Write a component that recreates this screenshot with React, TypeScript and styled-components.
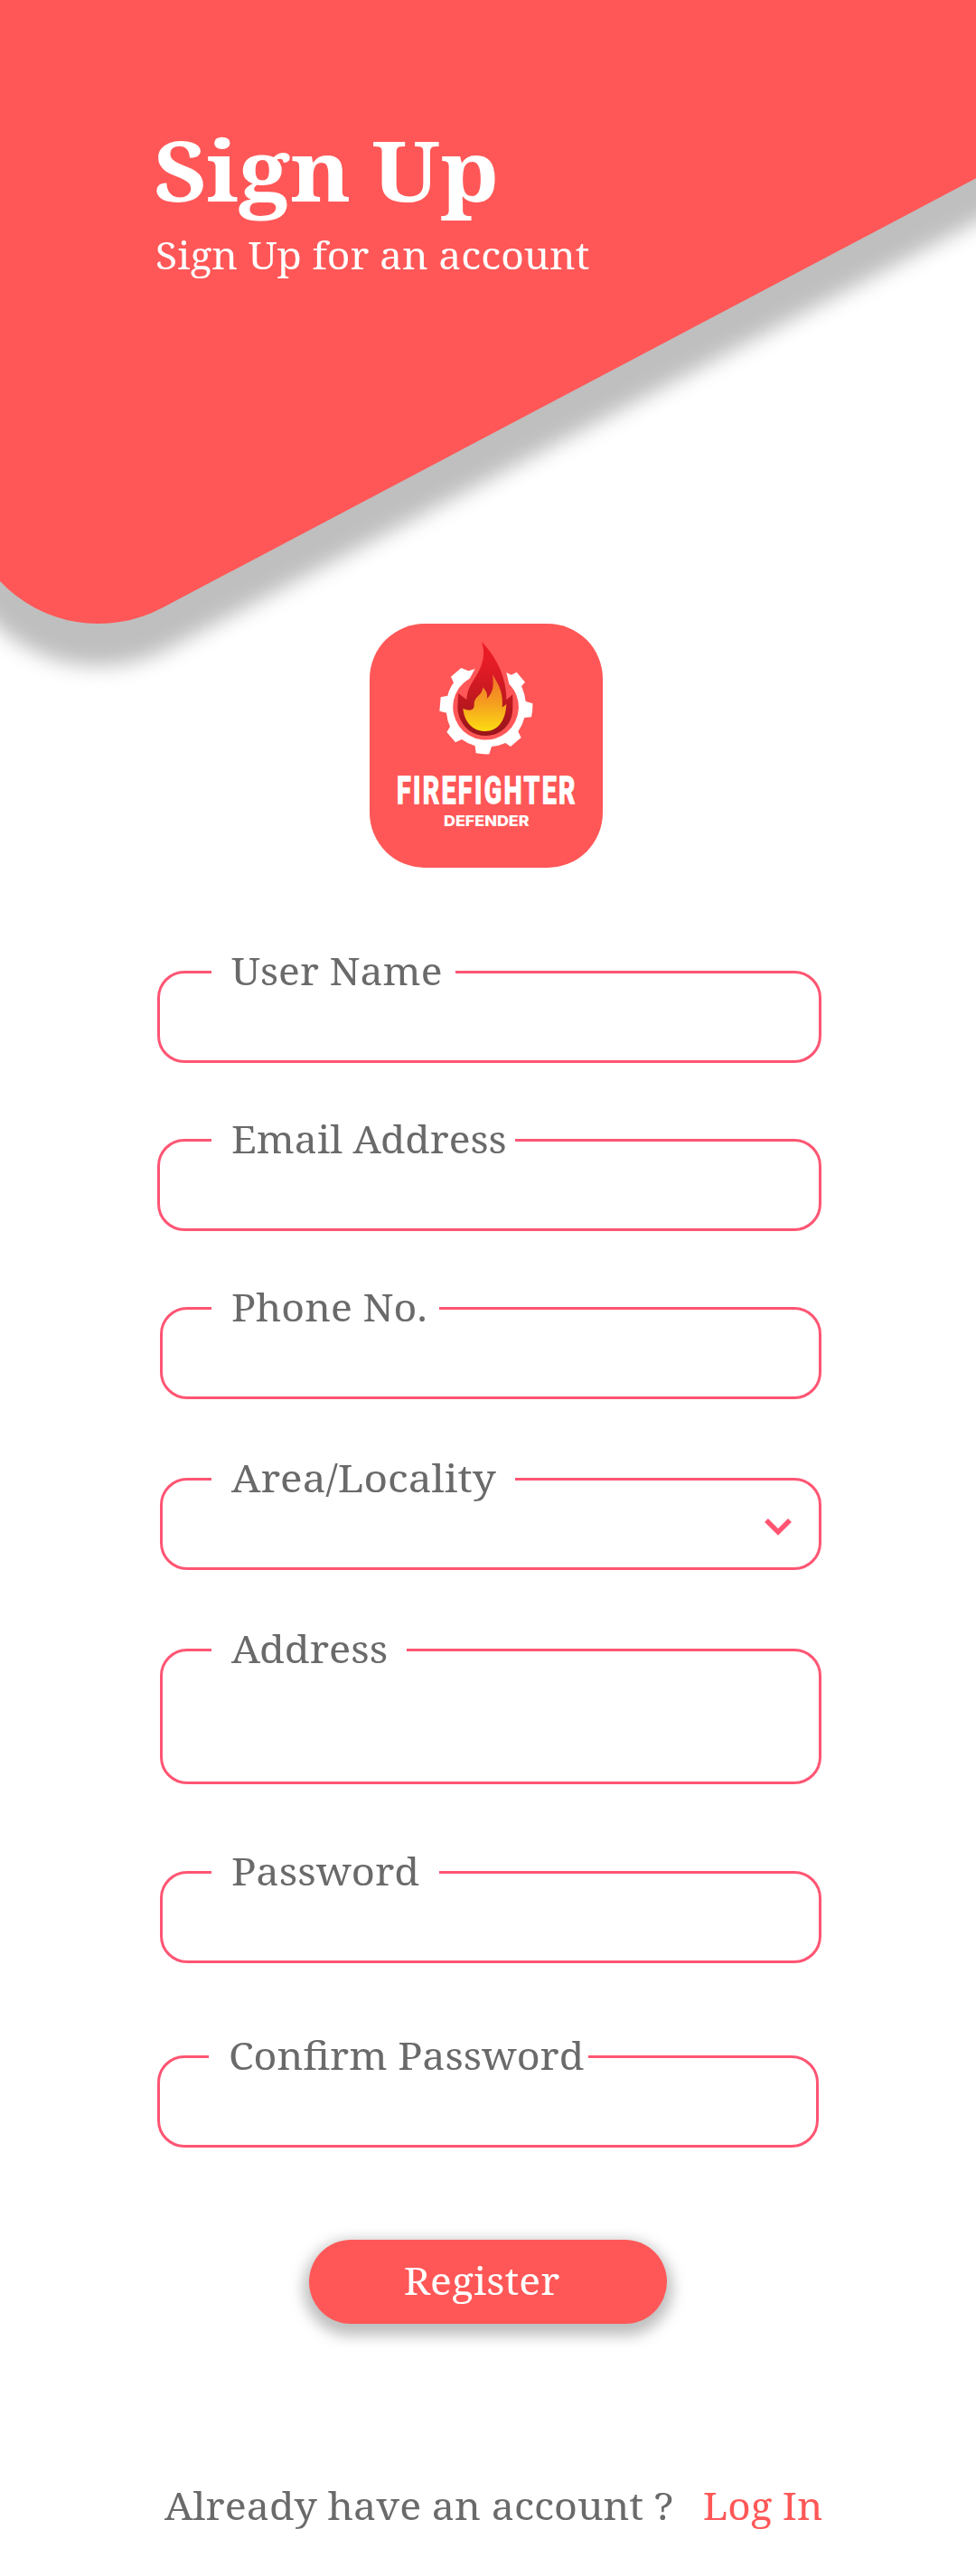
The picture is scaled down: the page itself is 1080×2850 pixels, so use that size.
import React from 'react';
import styled, { createGlobalStyle } from 'styled-components';

const coral = '#ff5757';
const pink = '#ff5573';
const grey = '#6a6a6a';
const LEGEND = 53;
const LIFT = 25;

const GlobalStyle = createGlobalStyle`
  * { box-sizing: border-box; }
  body { margin: 0; background: #fff; }
`;

const Page = styled.main`
  display: flow-root;
  width: 1080px;
  height: 2850px;
  overflow: hidden;
  background: #fff;
  font-family: 'Noto Serif', 'Droid Serif', 'DejaVu Serif Condensed', 'DejaVu Serif', serif;
  font-size: 41px;
  color: ${grey};
`;

const Wide = styled.span<{ $x: number; $from?: string }>`
  display: inline-block;
  transform: scaleX(${(p) => p.$x});
  transform-origin: ${(p) => p.$from ?? 'left'} center;
`;

const Header = styled.header`
  position: relative;
  height: 690px;
  padding: 132px 0 0 172px;
  color: #fff;
`;

const Backdrop = styled.svg`
  position: absolute;
  left: 0;
  top: 0;
  overflow: visible;
`;

const Title = styled.h1`
  position: relative;
  margin: 0 0 0 -2px;
  font-size: 92px;
  font-weight: 700;
  line-height: 112px;
  word-spacing: -3px;
  white-space: nowrap;
`;

const Subtitle = styled.p`
  position: relative;
  margin: 11px 0 0;
  line-height: 54px;
  white-space: nowrap;
`;

const Logo = styled.svg`
  display: block;
  position: relative;
  margin: 0 0 0 409px;
`;

const Form = styled.form`
  display: flex;
  flex-direction: column;
  padding-top: 89px;
`;

const Field = styled.fieldset<{ $left: number; $width: number; $height: number; $gap: number }>`
  flex: none;
  min-width: 0;
  width: ${(p) => p.$width}px;
  height: ${(p) => p.$height + LIFT}px;
  margin: 0 0 ${(p) => p.$gap - LIFT}px ${(p) => p.$left}px;
  padding: 0;
  border: 3px solid ${pink};
  border-radius: 30px;
`;

const Legend = styled.legend<{ $indent: number; $width: number }>`
  width: ${(p) => p.$width}px;
  height: ${LEGEND}px;
  margin-left: ${(p) => p.$indent}px;
  padding: 0 0 0 22px;
  line-height: ${LEGEND - 3}px;
  white-space: nowrap;
`;

const Control = styled.div`
  display: flex;
  justify-content: flex-end;
  padding: 17px 30px 0 0;
`;

const Register = styled.button`
  display: block;
  width: 396px;
  height: 93px;
  margin: 0 0 0 342px;
  padding: 0 0 3px;
  border: 0;
  border-radius: 47px;
  background: ${coral};
  box-shadow: 0 7px 16px 6px rgba(0, 0, 0, 0.26);
  color: #fff;
  font: inherit;
  white-space: nowrap;
`;

const Footer = styled.footer`
  display: flex;
  justify-content: space-between;
  width: 728px;
  margin: 174px 0 0 182px;
  line-height: 54px;
  white-space: nowrap;
`;

const LogIn = styled.a`
  color: ${coral};
`;

type FieldSpec = {
  label: string;
  left: number;
  width: number;
  height: number;
  gap: number;
  indent: number;
  legend: number;
  stretch: number;
  select?: boolean;
};

const fields: FieldSpec[] = [
  { label: 'User Name', left: 174, width: 735, height: 102, gap: 84, indent: 57, legend: 270, stretch: 1.087 },
  { label: 'Email Address', left: 174, width: 735, height: 102, gap: 84, indent: 57, legend: 336, stretch: 1.086 },
  { label: 'Phone No.', left: 177, width: 732, height: 102, gap: 87, indent: 54, legend: 252, stretch: 1.09 },
  { label: 'Area/Locality', left: 177, width: 732, height: 102, gap: 87, indent: 54, legend: 336, stretch: 1.122, select: true },
  { label: 'Address', left: 177, width: 732, height: 150, gap: 96, indent: 54, legend: 216, stretch: 1.105 },
  { label: 'Password', left: 177, width: 732, height: 102, gap: 102, indent: 54, legend: 252, stretch: 1.105 },
  { label: 'Confirm Password', left: 174, width: 732, height: 102, gap: 127, indent: 54, legend: 420, stretch: 1.094 },
];

function Emblem() {
  return (
    <Logo width="258" height="270" viewBox="26 30 774 810">
      <defs>
        <linearGradient id="flame" x1="0" y1="0" x2="0" y2="1">
          <stop offset="0" stopColor="#f01c26" />
          <stop offset="0.3" stopColor="#e01b25" />
          <stop offset="1" stopColor="#98151b" />
        </linearGradient>
        <linearGradient id="core" x1="0" y1="0" x2="0" y2="1">
          <stop offset="0" stopColor="#f1702a" />
          <stop offset="0.5" stopColor="#f59d20" />
          <stop offset="1" stopColor="#fddc12" />
        </linearGradient>
      </defs>
      <rect x="26" y="30" width="774" height="810" rx="183" fill={coral} />
      <path
        fill="#fff"
        d="M376 180L354 187L330 177L296 206L305 226Q290 246 285 269L262 274L258 320L281 326Q283 350 293 372L282 390L311 424L332 414Q352 429 376 436L379 460Q401 464 423 463L431 438Q455 436 477 426L494 438L529 408L519 388Q534 366 540 342L563 340Q568 318 567 295L544 288Q541 261 530 238L542 224L514 191L496 200L480 192L489 230A109 109 0 1 1 358 212Z"
      />
      <path
        fill="url(#flame)"
        d="M397 89C443 136 481 202 480 283L501 265V310C501 365 462 402 412 402C361 402 321 364 318 310L320 261L348 282C350 237 374 219 391 182C406 149 409 120 397 89Z"
      />
      <path
        fill="url(#core)"
        d="M434 198C453 232 470 254 466 308L480 297C478 350 453 387 410 387C368 387 340 355 336 311C351 319 373 322 373 300C371 270 401 270 402 241C415 255 418 264 415 279C439 256 438 229 434 198Z"
      />
      <g transform="translate(116 627) scale(0.7 1)">
        <text x="0" y="0" fill="#fff" stroke="#fff" strokeWidth="5" fontFamily="Roboto, sans-serif" fontWeight="700" fontSize="130" letterSpacing="11" textLength="856" lengthAdjust="spacingAndGlyphs">
          FIREFIGHTER
        </text>
      </g>
      <text x="272" y="702" fill="#fff" fontFamily="Inter, sans-serif" fontWeight="800" fontSize="49" textLength="284" lengthAdjust="spacingAndGlyphs">
        DEFENDER
      </text>
    </Logo>
  );
}

export default function App() {
  return (
    <Page>
      <GlobalStyle />
      <Header>
        <Backdrop width="1080" height="780" viewBox="0 0 1080 780">
          <defs>
            <filter id="soft" x="-20%" y="-20%" width="140%" height="140%">
              <feGaussianBlur stdDeviation="11" />
            </filter>
          </defs>
          <path
            d="M-200 -100H1280V140.5L186 718A165 165 0 0 1 -56 572Z"
            fill="#000"
            fillOpacity="0.25"
            filter="url(#soft)"
          />
          <path d="M0 0H1080V197.3L179 672.7A150 150 0 0 1 0 643Z" fill={coral} />
        </Backdrop>
        <Title>
          <Wide $x={1.1}>Sign Up</Wide>
        </Title>
        <Subtitle>
          <Wide $x={1.085}>Sign Up for an account</Wide>
        </Subtitle>
      </Header>
      <Emblem />
      <Form>
        {fields.map((f) => (
          <Field key={f.label} $left={f.left} $width={f.width} $height={f.height} $gap={f.gap}>
            <Legend $indent={f.indent} $width={f.legend}>
              <Wide $x={f.stretch}>{f.label}</Wide>
            </Legend>
            {f.select && (
              <Control>
                <svg width="30" height="19" viewBox="0 0 30 19">
                  <path d="M2 2L15 15L28 2" fill="none" stroke={pink} strokeWidth="5.4" />
                </svg>
              </Control>
            )}
          </Field>
        ))}
      </Form>
      <Register type="button">
        <Wide $x={1.09} $from="right">Register</Wide>
      </Register>
      <Footer>
        <Wide $x={1.094}>Already have an account ?</Wide>
        <LogIn>
          <Wide $x={1.075} $from="right">Log In</Wide>
        </LogIn>
      </Footer>
    </Page>
  );
}
